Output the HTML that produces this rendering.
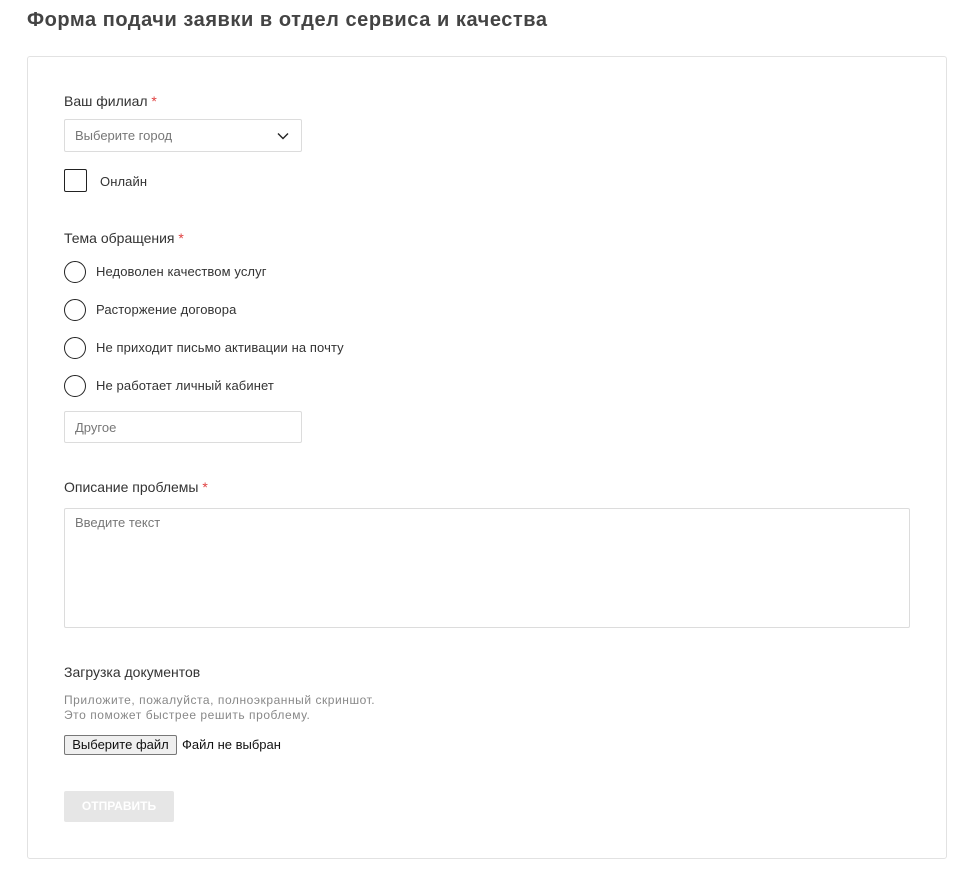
<!DOCTYPE html>
<html><head><meta charset="utf-8"><style>
body{margin:0;width:975px;height:884px;background:#fff;font-family:"Liberation Sans","DejaVu Sans",sans-serif;color:#333;position:relative;overflow:hidden}
.a{position:absolute;white-space:nowrap}
h1{position:absolute;left:27px;top:9px;margin:0;font-size:20px;font-weight:bold;color:#444;letter-spacing:0.55px}
.card{position:absolute;left:27px;top:56px;width:918px;height:801px;border:1px solid #e2e2e2;border-radius:3px}
.lbl{font-size:14px;color:#333}
.req{color:#e04040}
.box{position:absolute;border:1px solid #dcdcdc;border-radius:2px;font-size:13px;color:#777;box-sizing:border-box;padding-left:10px}
.rad{position:absolute;left:64px;width:20px;height:20px;border:1.5px solid #222;border-radius:50%;}
.rt{font-size:13px;color:#333;letter-spacing:0.1px}
</style></head><body>
<h1>Форма подачи заявки в отдел сервиса и качества</h1>
<div class="card"></div>
<div class="a lbl" style="left:64px;top:93px">Ваш филиал <span class="req">*</span></div>
<div class="box" style="left:64px;top:119px;width:238px;height:33px;line-height:31px">Выберите город
<svg style="position:absolute;right:12px;top:12px" width="12" height="8" viewBox="0 0 12 8"><path d="M1 1.5L6 6.5L11 1.5" fill="none" stroke="#222" stroke-width="1.4"/></svg></div>
<div class="a" style="left:64px;top:169px;width:21px;height:21px;border:1.5px solid #222;border-radius:2px"></div>
<div class="a rt" style="left:100px;top:174px">Онлайн</div>
<div class="a lbl" style="left:64px;top:230px">Тема обращения <span class="req">*</span></div>
<div class="rad" style="top:261px"></div><div class="a rt" style="left:96px;top:264px">Недоволен качеством услуг</div>
<div class="rad" style="top:299px"></div><div class="a rt" style="left:96px;top:302px">Расторжение договора</div>
<div class="rad" style="top:337px"></div><div class="a rt" style="left:96px;top:340px">Не приходит письмо активации на почту</div>
<div class="rad" style="top:375px"></div><div class="a rt" style="left:96px;top:378px">Не работает личный кабинет</div>
<div class="box" style="left:64px;top:411px;width:238px;height:32px;line-height:31px">Другое</div>
<div class="a lbl" style="left:64px;top:479px">Описание проблемы <span class="req">*</span></div>
<div class="box" style="left:64px;top:508px;width:846px;height:120px;padding-top:6px">Введите текст</div>
<div class="a lbl" style="left:64px;top:664px">Загрузка документов</div>
<div class="a" style="left:64px;top:693px;font-size:12px;color:#888;line-height:15px;letter-spacing:0.55px">Приложите, пожалуйста, полноэкранный скриншот.<br>Это поможет быстрее решить проблему.</div>
<div class="a" style="left:64px;top:735px;width:111px;height:18px;border:1px solid #777;border-radius:2px;background:#efefef;font-size:13px;color:#111;text-align:center;line-height:18px">Выберите файл</div>
<div class="a" style="left:182px;top:737px;font-size:13px;color:#111">Файл не выбран</div>
<div class="a" style="left:64px;top:791px;width:110px;height:31px;background:#e6e6e6;border-radius:2px;color:#fff;font-weight:bold;font-size:12px;text-align:center;line-height:31px">ОТПРАВИТЬ</div>
</body></html>
